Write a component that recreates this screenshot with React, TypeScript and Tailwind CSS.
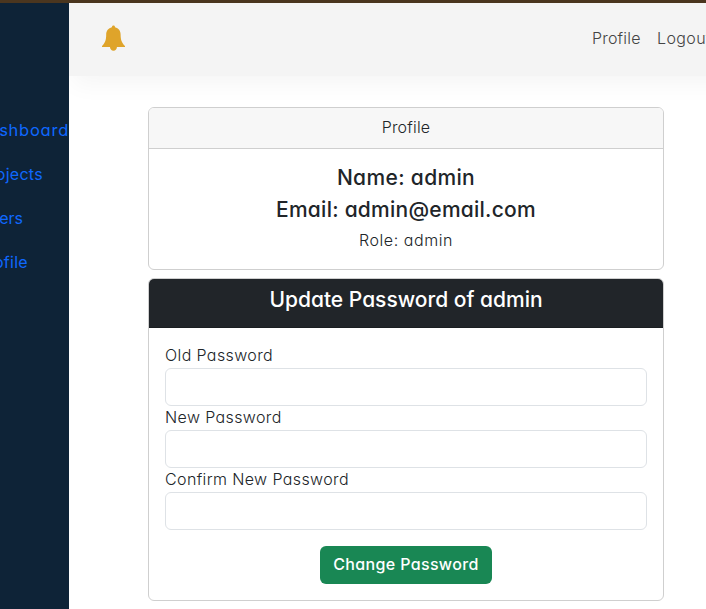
const sideLinks = [
  { label: "Dashboard", cls: "text-[16.5px] tracking-[0.75px]" },
  { label: "Projects", cls: "pr-[26px] tracking-[0.3px]" },
  { label: "Users", cls: "pr-[46px]" },
  { label: "Profile", cls: "pr-[41px] tracking-[0.3px]" },
];

const fields = ["Old Password", "New Password", "Confirm New Password"];

export default function App() {
  return (
    <div className="flex h-[609px] w-[706px] flex-col overflow-hidden bg-white font-[Inter,sans-serif] text-base font-[350] text-[#212529] [font-feature-settings:'cv11']">
      <div className="h-[3px] shrink-0 bg-[#4b361f]" />
      <div className="flex min-h-0 flex-1">
        <aside className="z-10 w-[69px] shrink-0 overflow-hidden bg-[#0e2337] pt-[115px]">
          <ul className="flex flex-col gap-5">
            {sideLinks.map((l) => (
              <li key={l.label} className={"flex justify-end leading-6 font-normal text-[#0f68fe] " + l.cls}>
                <a>{l.label}</a>
              </li>
            ))}
          </ul>
        </aside>
        <main className="min-w-0 flex-1">
          <header className="flex h-[73px] w-[700px] items-center bg-[#f4f4f4] pb-1 pl-8 shadow-[4px_8px_24px_rgba(0,0,0,0.045)]">
            <svg width="25" height="26" viewBox="0 0 25 26" className="shrink-0" fill="#dfa42a">
              <path d="M12.500 0.500c.9 0 1.500.6 1.500 1.700 3.600.8 5.600 3.500 5.600 7.200 0 5.800 1.400 8.400 4.400 11.600v1H1v-1c3-3.200 4.200-5.800 4.200-11.600 0-3.700 2.200-6.400 5.700-7.200 0-1.100.7-1.700 1.600-1.700zM8.900 21.500h7.100c0 2.500-1.400 4.200-3.500 4.200s-3.600-1.700-3.600-4.200z" />
            </svg>
            <nav className="ml-[466px] flex shrink-0 gap-4 text-[#444]">
              <a className="w-[49px] tracking-[0.2px] whitespace-nowrap">Profile</a>
              <a className="tracking-[0.4px] whitespace-nowrap">Logout</a>
            </nav>
          </header>
          <div className="mt-[31px] ml-[79px] flex w-[516px] flex-col gap-2">
            <section className="rounded-md border border-[#cfcfcf] bg-white text-center">
              <div className="rounded-t-[5px] border-b border-[#cfcfcf] bg-[#f7f7f7] pt-[7px] pb-[9px] tracking-[0.2px]">Profile</div>
              <div className="p-4">
                <h5 className="mb-1.5 text-[21px] leading-[26px] font-[480] tracking-[0.35px]">Name: admin</h5>
                <h5 className="mb-1.5 text-[21px] leading-[26px] font-[480] tracking-[0.25px]">Email: admin@email.com</h5>
                <p className="pb-0.5 leading-[22px] tracking-[0.55px]">Role: admin</p>
              </div>
            </section>
            <section className="rounded-md border border-[#cfcfcf] bg-white">
              <div className="rounded-t-[5px] border-b border-[#1a1e21] bg-[#212529] pt-2 pb-3.5 text-center">
                <h5 className="text-[21px] leading-[26px] font-medium text-white">Update Password of admin</h5>
              </div>
              <form className="p-4">
                {fields.map((label) => (
                  <label key={label} className="block">
                    <span className="block h-6 leading-[22px] tracking-[0.38px]">{label}</span>
                    <input type="password" className="block h-[38px] w-full rounded-md border border-[#dee2e6] bg-white px-3" />
                  </label>
                ))}
                <div className="mt-4 flex justify-center">
                  <button type="button" className="h-[38px] w-[172px] rounded-md bg-[#198754] pb-0.5 font-medium tracking-[0.35px] whitespace-nowrap text-white">Change Password</button>
                </div>
              </form>
            </section>
          </div>
        </main>
      </div>
    </div>
  );
}
